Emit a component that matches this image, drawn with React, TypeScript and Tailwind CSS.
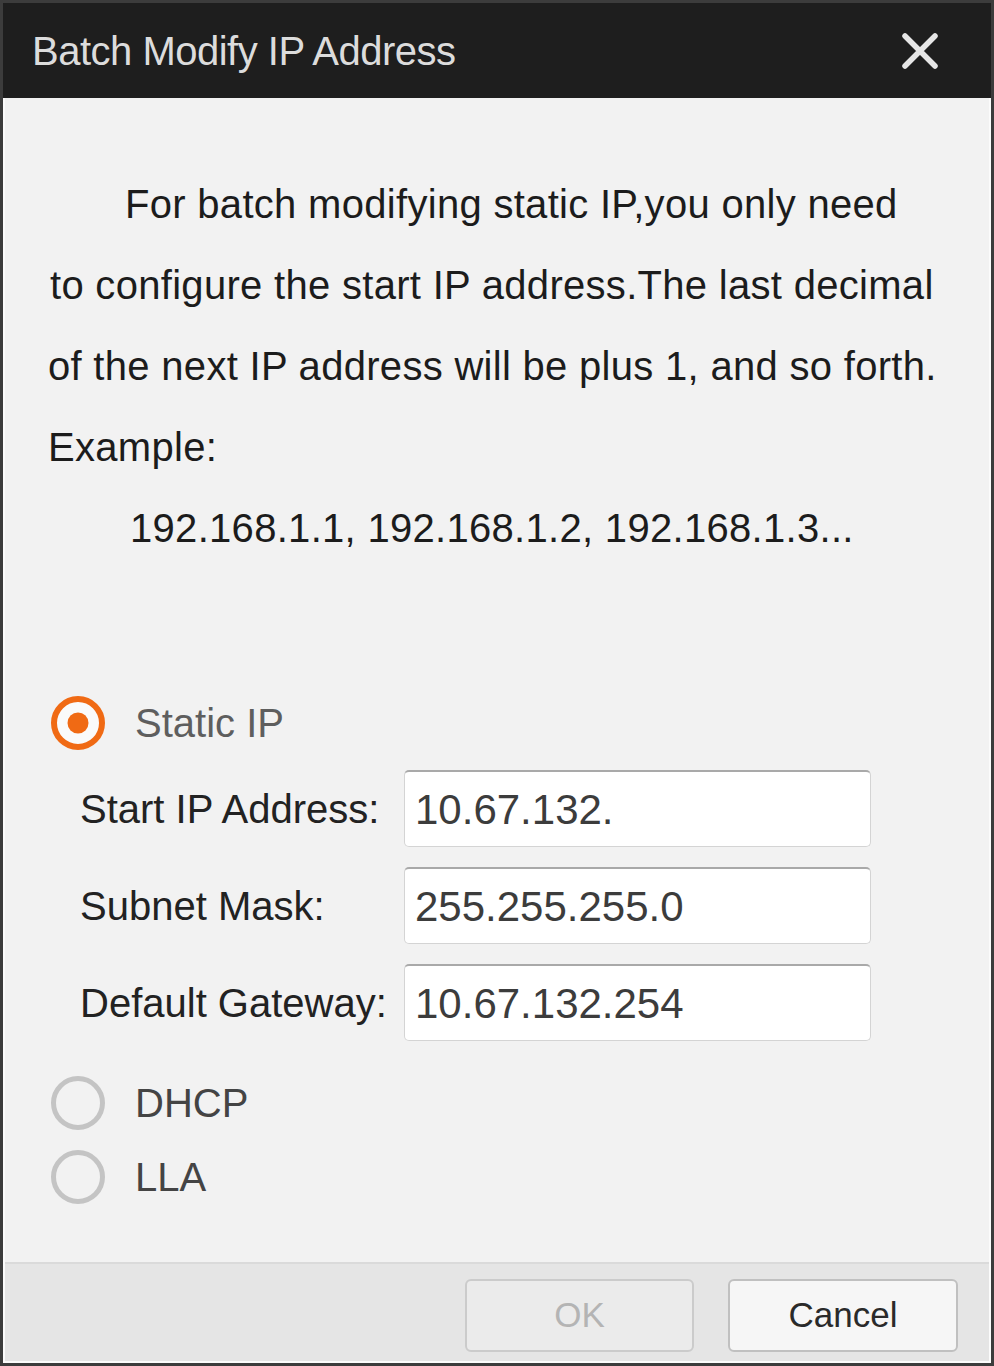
import React from "react";

const font = { fontFamily: '"Liberation Sans", Arial, sans-serif' };

function Radio({ checked }: { checked?: boolean }) {
  return (
    <svg width="58" height="58" viewBox="0 0 58 58" className="shrink-0">
      {checked ? (
        <>
          <circle cx="29" cy="29" r="24" fill="#fafafa" stroke="#f06a14" strokeWidth="6" />
          <circle cx="29" cy="29" r="10.5" fill="#f06a14" />
        </>
      ) : (
        <circle cx="29" cy="29" r="24.5" fill="none" stroke="#c4c4c4" strokeWidth="5" />
      )}
    </svg>
  );
}

function Field({ label, value }: { label: string; value: string }) {
  return (
    <div className="flex items-center">
      <div className="w-[399px] shrink-0 pl-[75px] text-[40px] text-[#222] whitespace-nowrap">{label}</div>
      <div className="w-[467px] h-[77px] bg-white rounded-[5px] border border-[#d4d4d4] border-t-2 border-t-[#a9a9a9] flex items-center pl-[10px] text-[42px] text-[#3c3c3c]">
        {value}
      </div>
    </div>
  );
}

export default function App() {
  const [mode, setMode] = React.useState("static");

  return (
    <div style={font} className="w-[994px] h-[1366px] flex flex-col bg-[#2e2e2e] border-[3px] border-[#3c3c3c]">
      {/* title bar */}
      <div className="h-[95px] bg-[#1e1e1e] flex items-center justify-between pl-[29px] pr-[52px]">
        <span className="text-[40px] tracking-[-0.5px] text-[#dcdcdc]">Batch Modify IP Address</span>
        <svg width="38" height="38" viewBox="0 0 38 38">
          <path d="M4 4 L34 34 M34 4 L4 34" stroke="#e6e6e6" strokeWidth="5.5" strokeLinecap="round" />
        </svg>
      </div>

      {/* body */}
      <div className="flex-1 flex flex-col bg-[#f2f2f2] border-x-2 border-b-2 border-[#fbfbfb]">
        <div className="pt-[66px] pl-[43px] text-[40px] tracking-[0.3px] text-[#1c1c1c] leading-[81px] whitespace-nowrap">
          <div className="pl-[77px]">For batch modifying static IP,you only need</div>
          <div className="pl-[2px]">to configure the start IP address.The last decimal</div>
          <div>of the next IP address will be plus 1, and so forth.</div>
          <div>Example:</div>
          <div className="pl-[82px]">192.168.1.1, 192.168.1.2, 192.168.1.3...</div>
        </div>

        <div className="mt-[124px] pl-[44px] flex items-center gap-[28px] cursor-pointer" onClick={() => setMode("static")}>
          <Radio checked={mode === "static"} />
          <span className="text-[40px] text-[#5e5e5e]">Static IP</span>
        </div>

        <div className="mt-[17px] flex flex-col gap-[20px]">
          <Field label="Start IP Address:" value="10.67.132." />
          <Field label="Subnet Mask:" value="255.255.255.0" />
          <Field label="Default Gateway:" value="10.67.132.254" />
        </div>

        <div className="mt-[32px] pl-[44px] flex items-center gap-[28px] cursor-pointer" onClick={() => setMode("dhcp")}>
          <Radio checked={mode === "dhcp"} />
          <span className="text-[40px] text-[#444]">DHCP</span>
        </div>
        <div className="mt-[14px] pl-[44px] flex items-center gap-[28px] cursor-pointer" onClick={() => setMode("lla")}>
          <Radio checked={mode === "lla"} />
          <span className="text-[40px] text-[#444]">LLA</span>
        </div>

        <div className="flex-1" />

        {/* footer */}
        <div className="h-[99px] bg-[#e5e5e5] border-t-2 border-[#dadada] flex justify-end items-start pt-[15px] pr-[31px] gap-[34px]">
          <button
            disabled
            className="w-[229px] h-[73px] rounded-[6px] border-2 border-[#cbcbcb] bg-[#ebebeb] text-[35px] text-[#b4b4b4]"
          >
            OK
          </button>
          <button className="w-[230px] h-[73px] rounded-[6px] border-2 border-[#c0c0c0] bg-[#f6f6f6] text-[35px] text-[#2a2a2a]">
            Cancel
          </button>
        </div>
      </div>
    </div>
  );
}
